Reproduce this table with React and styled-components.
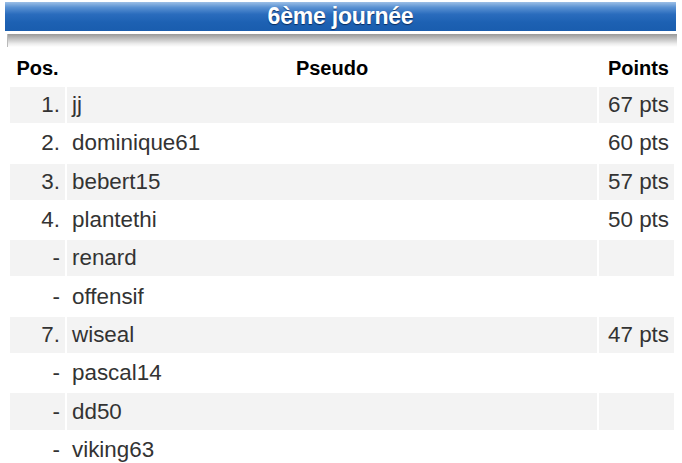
import React from 'react'
import styled, { createGlobalStyle } from 'styled-components'

const GlobalStyle = createGlobalStyle`
  body {
    margin: 0;
    background: #fff;
    font-family: "Liberation Sans", Arial, sans-serif;
  }
`

const Page = styled.div`
  width: 682px;
  padding: 1px 5px 0 4px;
  box-sizing: border-box;
`

const Banner = styled.div`
  height: 32px;
  border: 1px solid #fff;
  border-bottom-width: 2px;
  box-sizing: border-box;
  background: linear-gradient(
    to bottom,
    #9cbfe6 0%,
    #5b92d3 18%,
    #2a6cbd 42%,
    #1d61b3 70%,
    #1a5dae 100%
  );
  display: flex;
  align-items: center;
  justify-content: center;
  color: #fff;
  font-weight: bold;
  font-size: 23px;
  letter-spacing: -0.2px;
  text-shadow: 0 1px 1px rgba(0, 20, 60, 0.7);
`

const Shadow = styled.div`
  height: 13px;
  margin: 1px 0 0 3px;
  background: linear-gradient(to bottom, #989898 0%, #c4c4c4 40%, #ececec 75%, #ffffff 100%);
  border-left: 1px solid #bbb;
`

const Table = styled.table`
  margin: 3px 0 0 4px;
  width: 668px;
  border-collapse: separate;
  border-spacing: 2px;
  color: #333;
  font-size: 22.4px;
`

const HeadCell = styled.th`
  height: 33px;
  padding: 0 5px;
  font-size: 20px;
  font-weight: bold;
  color: #000;
  text-align: ${p => p.$align || 'center'};
`

const Row = styled.tr`
  background: ${p => (p.$odd ? '#f3f3f3' : '#fff')};
`

const Cell = styled.td`
  height: 36.3px;
  padding: 0 5px;
  text-align: ${p => p.$align || 'left'};
  white-space: nowrap;
`

const rows = [
  ['1.', 'jj', '67 pts'],
  ['2.', 'dominique61', '60 pts'],
  ['3.', 'bebert15', '57 pts'],
  ['4.', 'plantethi', '50 pts'],
  ['-', 'renard', ''],
  ['-', 'offensif', ''],
  ['7.', 'wiseal', '47 pts'],
  ['-', 'pascal14', ''],
  ['-', 'dd50', ''],
  ['-', 'viking63', ''],
]

const App = () => {
  return (
    <Page>
      <GlobalStyle />
      <Banner>6ème journée</Banner>
      <Shadow />
      <Table>
        <colgroup>
          <col style={{ width: 55 }} />
          <col />
          <col style={{ width: 75 }} />
        </colgroup>
        <thead>
          <tr>
            <HeadCell>Pos.</HeadCell>
            <HeadCell>Pseudo</HeadCell>
            <HeadCell $align="right">Points</HeadCell>
          </tr>
        </thead>
        <tbody>
          {rows.map(([pos, name, pts], i) => (
            <Row key={name} $odd={i % 2 === 0}>
              <Cell $align="right">{pos}</Cell>
              <Cell>{name}</Cell>
              <Cell $align="right">{pts}</Cell>
            </Row>
          ))}
        </tbody>
      </Table>
    </Page>
  )
}

export default App
